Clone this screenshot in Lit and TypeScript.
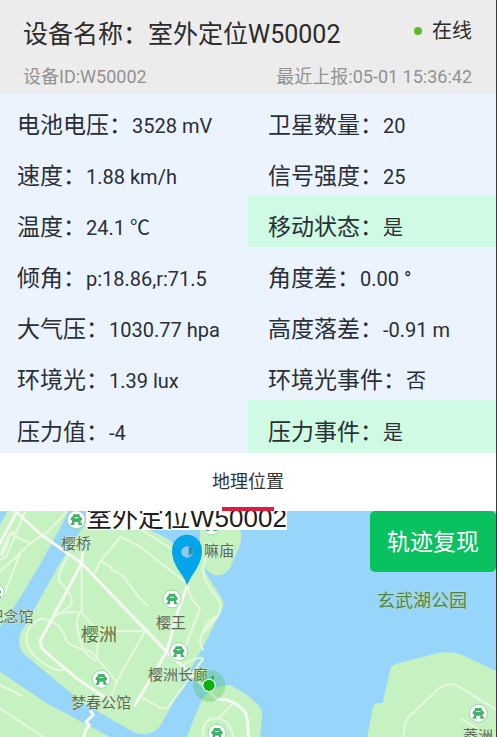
import { LitElement, html, svg, css } from "lit";
import { customElement, property } from "lit/decorators.js";
import { classMap } from "lit/directives/class-map.js";

interface Reading {
  label: string;
  value: string;
  active?: boolean;
}

const READINGS: Reading[] = [
  { label: "电池电压", value: "3528 mV" },
  { label: "卫星数量", value: "20" },
  { label: "速度", value: "1.88 km/h" },
  { label: "信号强度", value: "25" },
  { label: "温度", value: "24.1 ℃" },
  { label: "移动状态", value: "是", active: true },
  { label: "倾角", value: "p:18.86,r:71.5" },
  { label: "角度差", value: "0.00 °" },
  { label: "大气压", value: "1030.77 hpa" },
  { label: "高度落差", value: "-0.91 m" },
  { label: "环境光", value: "1.39 lux" },
  { label: "环境光事件", value: "否" },
  { label: "压力值", value: "-4" },
  { label: "压力事件", value: "是", active: true },
];

@customElement("device-header")
class DeviceHeader extends LitElement {
  @property() name = "";
  @property() deviceId = "";
  @property() reported = "";

  static styles = css`
    :host {
      display: block;
      background: #ececec;
      padding: 16px 24px 4px 23px;
    }
    .line {
      display: flex;
      justify-content: space-between;
      align-items: center;
    }
    .name {
      margin: 0;
      font-size: 25px;
      font-weight: 400;
      line-height: 38px;
      color: #2b2b2b;
    }
    .status {
      display: flex;
      align-items: center;
      gap: 10px;
      font-size: 20px;
      line-height: 30px;
      padding-bottom: 8px;
      color: #2b2b2b;
    }
    .dot {
      width: 8px;
      height: 8px;
      border-radius: 50%;
      background: #5cbb25;
    }
    .meta {
      margin-top: 10px;
      font-size: 18px;
      line-height: 26px;
      color: #929292;
    }
  `;

  render() {
    return html`
      <div class="line">
        <h1 class="name">设备名称：${this.name}</h1>
        <div class="status"><span class="dot"></span>在线</div>
      </div>
      <div class="line meta">
        <span>设备ID:${this.deviceId}</span>
        <span>最近上报:${this.reported}</span>
      </div>
    `;
  }
}

@customElement("reading-grid")
class ReadingGrid extends LitElement {
  static styles = css`
    :host {
      display: block;
      background: #ebf3ff;
    }
    .grid {
      display: grid;
      grid-template-columns: 1fr 1fr;
      margin: 0;
    }
    .cell {
      display: flex;
      align-items: baseline;
      padding: 15px 0 2px 17px;
      line-height: 34px;
      color: #2a2e35;
      white-space: nowrap;
    }
    .cell:nth-child(even) {
      padding-left: 20px;
    }
    .cell:nth-last-child(-n + 2) {
      padding-top: 16px;
      padding-bottom: 3px;
    }
    .active {
      background: #cffae4;
    }
    dt {
      font-size: 23px;
    }
    dd {
      margin: 0;
      font-size: 20px;
    }
  `;

  render() {
    return html`
      <dl class="grid">
        ${READINGS.map(
          (r) => html`
            <div class=${classMap({ cell: true, active: !!r.active })}>
              <dt>${r.label}：</dt>
              <dd>${r.value}</dd>
            </div>
          `
        )}
      </dl>
    `;
  }
}

const PAVILIONS = [
  [229, 59],
  [516, 297],
  [536, 455],
  [304, 538],
  [651, 700],
  [1435, 640],
  [-14, 278],
  [634, 78],
];

const PLACES: { x: number; y: number; text: string }[] = [
  { x: 76, y: 38, text: "樱桥" },
  { x: 219, y: 45, text: "嘛庙" },
  { x: 11, y: 111, text: "纪念馆" },
  { x: 171, y: 117, text: "樱王" },
  { x: 178, y: 169, text: "樱洲长廊" },
  { x: 101, y: 197, text: "梦春公馆" },
  { x: 478, y: 230, text: "菱洲" },
];

@customElement("location-map")
class LocationMap extends LitElement {
  @property() name = "";

  static styles = css`
    :host {
      display: block;
      position: relative;
      overflow: hidden;
      background: #98d5fa;
    }
    .canvas {
      display: block;
      width: 100%;
      height: 100%;
    }
    .land {
      fill: #c6f1c0;
    }
    .road {
      fill: none;
      stroke: #f7f9f5;
      stroke-linejoin: round;
      stroke-linecap: round;
      stroke-width: 9;
    }
    .path {
      fill: none;
      stroke: #e6f8e0;
      stroke-linejoin: round;
      stroke-width: 6;
    }
    .badge {
      fill: #fff;
      stroke: #9ad5a6;
      stroke-width: 3;
    }
    .glyph {
      fill: #41b268;
      fill-rule: evenodd;
    }
    .place {
      font-size: 15px;
      fill: #5c6b59;
      stroke: #d4f2ce;
      stroke-width: 1;
      paint-order: stroke;
      text-anchor: middle;
    }
    .area {
      font-size: 18px;
      fill: #4f7544;
    }
    .park {
      font-size: 18px;
      fill: #4c8744;
      stroke: #b5dfd0;
    }
    .title {
      position: absolute;
      top: -5px;
      left: 86px;
      background: #fff;
      color: #1c1c1c;
      font-family: "Liberation Sans", "Noto Sans CJK SC", sans-serif;
      font-size: 26px;
      line-height: 24px;
    }
    .replay {
      position: absolute;
      top: 0;
      right: 0;
      padding: 14px 17px 12px;
      border: 0;
      border-radius: 5px;
      background: #0ac160;
      color: #fff;
      font: inherit;
      font-size: 23px;
      line-height: 35px;
    }
  `;

  private pavilion([x, y]: number[]) {
    return svg`
      <g transform="translate(${x} ${y})">
        <circle class="badge" r="27" />
        <path class="glyph" d="M-10 -16H10V-11L17 -4V2H13V11H17V16H6V7H-6V16H-17V11H-13V2H-17V-4L-10 -11Z M-6 -7H6V-4H-6Z" />
      </g>
    `;
  }

  render() {
    return html`
      <svg class="canvas" viewBox="0 0 496 226" preserveAspectRatio="xMinYMin slice" role="img" aria-label="地图">
        <g transform="scale(0.33333) translate(0 -33)">
          <path class="land" d="M22 33H205L185 75Q120 200 40 325Q20 350 0 380V75Z" />
          <path class="land" d="M262 60L420 75L500 115L600 190L665 295Q675 310 668 325L612 435L480 680Q440 720 390 690L250 610L75 465Q48 440 62 400L180 190Z" />
          <path class="land" d="M0 515L140 610L330 711H0Z" />
          <path class="land" d="M560 711L605 600Q640 555 690 555L735 580L775 615Q788 628 786 650L780 711Z" />
          <path class="land" d="M600 90H720Q728 110 718 140L690 205Q670 232 640 225L600 195Z" />
          <path class="land" d="M1102 711L1118 625Q1122 608 1132 610L1148 608L1172 505Q1178 495 1195 490L1310 460Q1350 453 1380 462L1488 513V711Z" />

          <path class="path" d="M0 165L30 100L90 130L150 90L200 33M0 215L70 150L90 130M45 95Q20 100 25 125L5 170M60 160L10 290M0 180L18 172L75 35" />
          <path class="path" d="M205 165Q170 225 178 245Q220 280 215 315L165 350M165 345Q210 332 245 338Q290 395 310 393H435L350 545M245 190V338Q215 350 250 450Q285 490 290 475Q300 400 275 385" />
          <path class="path" d="M285 220L300 185L362 110L420 140L555 245M300 185Q330 190 335 210Q370 220 385 250Q420 300 445 318M130 355Q75 370 80 430Q100 480 165 508Q190 515 195 505M130 355L175 375Q195 400 200 425Q225 445 275 455L350 545L330 600" />
          <path class="path" d="M425 90L560 175M563 260Q570 300 600 325L560 430L535 480M630 130L610 200Q605 240 650 290Q670 320 655 345L610 400Q590 420 610 450M655 345Q620 360 605 405M610 475Q580 470 545 500M610 475L510 615Q500 630 480 622L420 590" />
          <path class="path" d="M0 625L130 711M0 555L70 590M610 711Q605 660 645 655Q690 655 700 711M655 655L700 610" />
          <path class="path" d="M1210 711Q1212 670 1225 652L1320 562Q1345 548 1370 556L1488 628M1380 655L1440 690" />
          <path class="road" d="M45 33L125 105L245 190L370 320L500 455L560 510L650 597Q700 595 735 635Q745 660 745 711" />
          <path class="road" d="M0 130L45 45M245 190L122 420Q120 440 132 452L230 535L310 590M565 250L535 330L500 455L405 615" />
          <path class="road" d="M245 190L248 155M272 632L280 645L258 665L268 675L258 690L250 711" />

          ${PAVILIONS.map((p) => this.pavilion(p))}
        </g>
        ${PLACES.map((p) => svg`<text class="place" x=${p.x} y=${p.y}>${p.text}</text>`)}
        <text class="place area" x="99" y="130">樱洲</text>
        <text class="place park" x="422" y="96">玄武湖公园</text>
        <g transform="scale(0.33333) translate(0 -33)">
          <circle cx="628" cy="557" r="48" fill="#3fc04a" fill-opacity="0.3" />
          <circle cx="627" cy="556" r="20" fill="#fff" />
          <circle cx="627" cy="556" r="17" fill="#0cb30f" />
          <path d="M641 540V526L632 532Z" fill="#0cb30f" />
          <path d="M562 258C552 222 516 200 516 151A45 47 0 0 1 606 151C606 200 572 222 562 258Z" fill="#04a5ea" />
          <circle cx="561" cy="156" r="17" fill="#8fcdf0" />
          <path d="M566 142H577V160L566 167Z" fill="#3f87a0" />
        </g>
      </svg>
      <div class="title">${this.name}</div>
      <button class="replay" type="button">轨迹复现</button>
    `;
  }
}

@customElement("app-root")
class AppRoot extends LitElement {
  static styles = css`
    :host {
      display: block;
      background: #fff;
      font-family: Roboto, "Noto Sans CJK SC", sans-serif;
    }
    .screen {
      display: flex;
      flex-direction: column;
      box-sizing: border-box;
      min-height: 100vh;
      margin-right: 3px;
      border-right: 1px solid #3c3c3c;
    }
    .tabs {
      display: flex;
      justify-content: center;
      background: #fff;
    }
    .tab {
      display: flex;
      flex-direction: column;
      align-items: center;
      gap: 11px;
      padding: 15px 0 0;
      border: 0;
      background: none;
      font: inherit;
      font-size: 18px;
      line-height: 28px;
      color: #333;
    }
    .marker {
      width: 52px;
      height: 4px;
      background: #dc1c3c;
    }
    .map {
      flex: 1;
      min-height: 226px;
    }
  `;

  render() {
    return html`
      <main class="screen">
        <device-header name="室外定位W50002" .deviceId=${"W50002"} reported="05-01 15:36:42"></device-header>
        <reading-grid></reading-grid>
        <nav class="tabs">
          <button class="tab" type="button">地理位置<span class="marker"></span></button>
        </nav>
        <location-map class="map" name="室外定位W50002"></location-map>
      </main>
    `;
  }
}
